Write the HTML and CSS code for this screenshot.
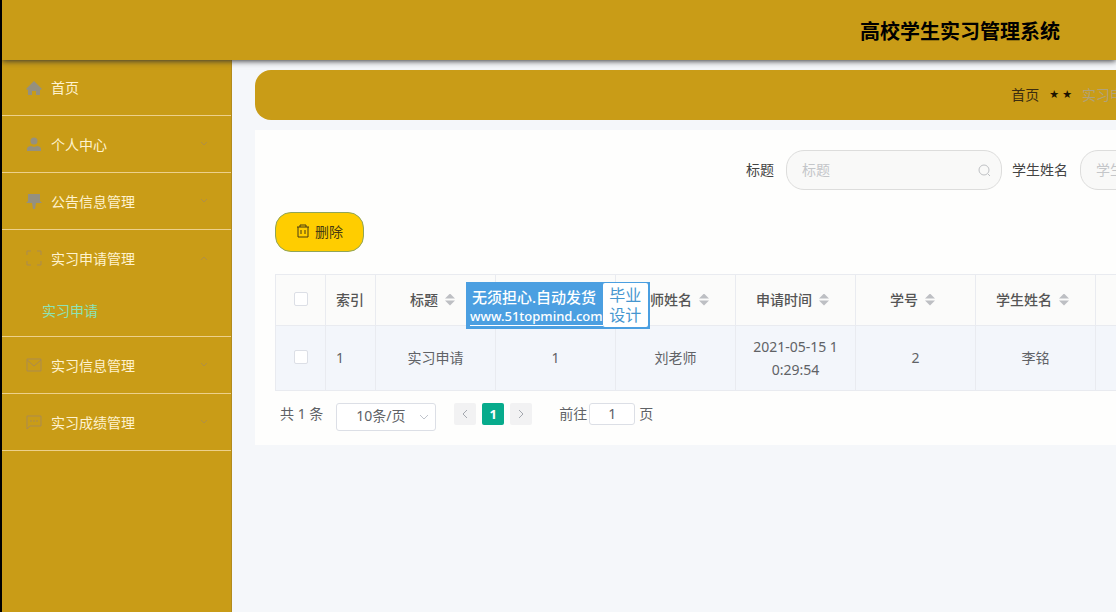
FILE: index.html
```html
<!doctype html>
<html lang="zh-CN">

<head>
    <meta charset="utf-8">
    <title>高校学生实习管理系统</title>
    <link rel="stylesheet" href="styles.css">
</head>

<body>
    <header class="header">
        <h1>高校学生实习管理系统</h1>
    </header>
    <div class="layout">
        <nav class="sidebar">
            <ul class="menu">
                <li>
                    <a href="#">
                        <svg class="menu-icon" viewBox="0 0 16 16"><path fill="currentColor" d="M8 1L0 9l2 1v5h4v-4h4v4h4v-5l2-1z"/></svg>
                        <span>首页</span>
                    </a>
                </li>
                <li>
                    <a href="#">
                        <svg class="menu-icon" viewBox="0 0 16 16"><circle cx="8" cy="5" r="3.5" fill="currentColor"/><path fill="currentColor" d="M1 15v-2c0-2 2-3 4-3l3 1 3-1c2 0 4 1 4 3v2z"/></svg>
                        <span>个人中心</span>
                        <svg class="arrow" viewBox="0 0 10 10"><path d="M2 3l3 3 3-3"/></svg>
                    </a>
                </li>
                <li>
                    <a href="#">
                        <svg class="menu-icon" viewBox="0 0 16 16"><path fill="currentColor" d="M2 1h12v7l2 2h-6l-1 6H7l-1-6H0l2-2z"/></svg>
                        <span>公告信息管理</span>
                        <svg class="arrow" viewBox="0 0 10 10"><path d="M2 3l3 3 3-3"/></svg>
                    </a>
                </li>
                <li>
                    <a href="#">
                        <svg class="menu-icon line" viewBox="0 0 16 16"><path d="M1 5V1h4M11 1h4v4M15 11v4h-4M5 15H1v-4"/></svg>
                        <span>实习申请管理</span>
                        <svg class="arrow" viewBox="0 0 10 10"><path d="M2 7l3-3 3 3"/></svg>
                    </a>
                    <a class="sub active" href="#">实习申请</a>
                </li>
                <li>
                    <a href="#">
                        <svg class="menu-icon line" viewBox="0 0 16 16"><path d="M1 2h14v12H1zM1 3l7 6 7-6"/></svg>
                        <span>实习信息管理</span>
                        <svg class="arrow" viewBox="0 0 10 10"><path d="M2 3l3 3 3-3"/></svg>
                    </a>
                </li>
                <li>
                    <a href="#">
                        <svg class="menu-icon line" viewBox="0 0 16 16"><path d="M1 15V2h14v10H4l-3 3M4 7h2M7 7h2M10 7h2"/></svg>
                        <span>实习成绩管理</span>
                        <svg class="arrow" viewBox="0 0 10 10"><path d="M2 3l3 3 3-3"/></svg>
                    </a>
                </li>
            </ul>
        </nav>
        <main class="main">
            <div class="breadcrumb">
                <a href="#">首页</a>
                <span class="stars"><span>★</span><span>★</span></span>
                <span class="current">实习申请</span>
            </div>
            <div class="panel">
                <form class="search">
                    <label for="title">标题</label>
                    <div class="search-box">
                        <input type="text" id="title" placeholder="标题">
                        <svg viewBox="0 0 14 14"><circle cx="7" cy="7" r="5"/><path d="M11 11l2 2"/></svg>
                    </div>
                    <label for="student">学生姓名</label>
                    <div class="search-box">
                        <input type="text" id="student" placeholder="学生姓名">
                    </div>
                </form>
                <button class="delete-btn" type="button">
                    <svg viewBox="0 0 14 14"><path d="M1 3h12M4 3V1h6v2M2 3v10h10V3M5 6v4M9 6v4"/></svg>
                    删除
                </button>
                <table class="list">
                    <colgroup>
                        <col class="col-small"><col class="col-small">
                        <col class="col"><col class="col"><col class="col">
                        <col class="col"><col class="col"><col class="col">
                        <col>
                    </colgroup>
                    <thead>
                        <tr>
                            <th><input type="checkbox" aria-label="全选"></th>
                            <th class="left">索引</th>
                            <th>标题<i class="sort"></i></th>
                            <th></th>
                            <th>老师姓名<i class="sort"></i></th>
                            <th>申请时间<i class="sort"></i></th>
                            <th>学号<i class="sort"></i></th>
                            <th>学生姓名<i class="sort"></i></th>
                            <th></th>
                        </tr>
                    </thead>
                    <tbody>
                        <tr>
                            <td><input type="checkbox" aria-label="选择"></td>
                            <td class="left">1</td>
                            <td>实习申请</td>
                            <td>1</td>
                            <td>刘老师</td>
                            <td class="time">2021-05-15 10:29:54</td>
                            <td>2</td>
                            <td>李铭</td>
                            <td></td>
                        </tr>
                    </tbody>
                </table>
                <div class="pagination">
                    <span class="total">共 1 条</span>
                    <div class="size">
                        <select aria-label="每页条数">
                            <option>10条/页</option>
                        </select>
                        <svg viewBox="0 0 10 10"><path d="M1 3l4 4 4-4"/></svg>
                    </div>
                    <div class="pager">
                        <button type="button" aria-label="上一页"><svg viewBox="0 0 10 10"><path d="M7 1L3 5l4 4"/></svg></button>
                        <button class="on" type="button">1</button>
                        <button type="button" aria-label="下一页"><svg viewBox="0 0 10 10"><path d="M3 1l4 4-4 4"/></svg></button>
                    </div>
                    <label for="page">前往</label>
                    <input type="text" id="page" value="1">
                    <span>页</span>
                </div>
            </div>
        </main>
    </div>
    <div class="ad">
        <div class="ad-text">
            <span>无须担心.自动发货</span>
            <a href="#">www.51topmind.com</a>
        </div>
        <div class="ad-box">毕业<br>设计</div>
    </div>
</body>

</html>
```
FILE: styles.css
```css
* {
    box-sizing: border-box;
}

body {
    display: flex;
    flex-direction: column;
    min-height: 100vh;
    margin: 0;
    border-left: 2px solid #000;
    background-color: #f5f7fa;
    color: #606266;
    font-family: "Noto Sans", "Noto Sans CJK SC", sans-serif;
    font-size: 14px;
    line-height: 23px;
    overflow: hidden;
}

a {
    text-decoration: none;
}

svg {
    fill: none;
    stroke: currentColor;
}

input,
select,
button {
    font: inherit;
    color: inherit;
}

.header {
    display: flex;
    justify-content: flex-end;
    align-items: center;
    height: 60px;
    padding: 4px 56px 0 0;
    background-color: #c99c17;
    box-shadow: 0 1px 6px #333;
    position: relative;
}

.header h1 {
    margin: 0;
    color: #000;
    font-size: 20px;
    line-height: 30px;
}

.layout {
    display: flex;
    flex: 1;
}

.sidebar {
    flex: 0 0 230px;
    background-color: #c99c17;
    border-right: 1px solid #b38b1c;
}

.menu {
    margin: 0;
    padding: 0;
    list-style: none;
}

.menu li {
    border-bottom: 1px solid #edd08b;
}

.menu li a {
    display: flex;
    align-items: center;
    height: 56px;
    padding: 0 22px 0 24px;
    color: #fff3cf;
}

.menu li:first-child a {
    height: 55px;
}

.menu li a.sub {
    height: 50px;
    padding: 0 0 2px 40px;
    color: #8de3b5;
}

.menu-icon {
    width: 16px;
    height: 16px;
    margin-right: 9px;
    color: #95907f;
    stroke: none;
}

.menu-icon.line {
    color: #ab8b50;
    stroke: currentColor;
}

.arrow {
    width: 10px;
    height: 10px;
    margin-left: auto;
    color: #b08f45;
}

/* wider than the window, the right side is cut off */
.main {
    flex: 1;
    min-width: 0;
    margin-right: -200px;
    padding: 10px 0 0 23px;
}

.breadcrumb {
    display: flex;
    justify-content: flex-end;
    align-items: center;
    height: 50px;
    margin-bottom: 10px;
    padding: 0 178px 2px 0;
    border-radius: 16px;
    background-color: #c99c17;
}

.breadcrumb a {
    color: #3b2c10;
}

.breadcrumb .stars {
    display: flex;
    gap: 3px;
    margin: 0 10px;
    color: #1c1300;
    font-family: "DejaVu Sans", sans-serif;
    font-size: 11px;
}

.breadcrumb .current {
    color: #b0a27a;
}

.panel {
    padding: 20px 20px 14px;
    background-color: #fefefd;
}

.search {
    display: flex;
    justify-content: flex-end;
    align-items: center;
    margin-bottom: 22px;
}

.search label {
    margin: 0 12px 0 10px;
    padding-bottom: 2px;
    color: #444;
}

.search-box {
    position: relative;
}

.search-box input {
    display: block;
    width: 216px;
    height: 40px;
    padding: 0 30px 2px 15px;
    border: 1px solid #dddddc;
    border-radius: 18px;
    background-color: #f9f9f8;
}

.search-box input::placeholder {
    color: #c4c6c9;
}

.search-box svg {
    position: absolute;
    top: 13px;
    right: 11px;
    width: 14px;
    height: 14px;
    color: #bfc1c4;
}

.delete-btn {
    display: flex;
    align-items: center;
    gap: 5px;
    height: 40px;
    margin-bottom: 22px;
    padding: 0 20px 2px;
    border: 1px solid #90a558;
    border-radius: 16px;
    background-color: #ffcd00;
    color: #473a12;
}

.delete-btn svg {
    width: 14px;
    height: 14px;
}

.list {
    width: 100%;
    table-layout: fixed;
    border-collapse: collapse;
}

.col-small {
    width: 50px;
}

.col {
    width: 120px;
}

.list th,
.list td {
    padding: 8px 10px 10px;
    border: 1px solid #e9ebf0;
    text-align: center;
    word-break: break-all;
}

.list th {
    height: 51px;
    background-color: #fbfbfa;
    color: #555;
    font-weight: 500;
    white-space: nowrap;
}

.list td {
    height: 65px;
    background-color: #f3f6fb;
}

.list td.time {
    padding: 9px 13px;
}

.list .left {
    text-align: left;
}

.list input {
    display: block;
    appearance: none;
    width: 14px;
    height: 14px;
    margin: 0 auto;
    border: 1px solid #dcdfe6;
    border-radius: 2px;
    background-color: #fff;
}

.sort {
    display: inline-block;
    width: 10px;
    height: 12px;
    margin: 0 6px 0 7px;
    vertical-align: -1px;
    background-color: #bdbfc3;
    clip-path: polygon(50% 0, 100% 42%, 0 42%, 0 58%, 100% 58%, 50% 100%, 0 58%, 0 42%);
}

.pagination {
    display: flex;
    align-items: flex-start;
    margin-top: 12px;
    padding-left: 5px;
    line-height: 22px;
}

.size {
    position: relative;
    margin: 0 18px 0 13px;
}

.size select {
    display: block;
    appearance: none;
    width: 100px;
    height: 28px;
    padding: 0 19px 2px;
    border: 1px solid #dcdfe6;
    border-radius: 3px;
    background-color: #fff;
}

.size svg {
    position: absolute;
    top: 9px;
    right: 7px;
    width: 10px;
    height: 10px;
    color: #c0c4cc;
}

.pager {
    display: flex;
    gap: 6px;
    margin-right: 27px;
}

.pager button {
    display: flex;
    justify-content: center;
    align-items: center;
    width: 22px;
    height: 22px;
    padding: 0;
    border: none;
    border-radius: 2px;
    background-color: #f2f2f3;
    color: #a4a8af;
}

.pager button.on {
    background-color: #07ab8c;
    color: #fff;
    font-size: 13px;
    font-weight: bold;
}

.pager svg {
    width: 10px;
    height: 10px;
}

.pagination input {
    width: 46px;
    height: 22px;
    margin: 0 4px 0 2px;
    border: 1px solid #dcdfe6;
    border-radius: 3px;
    text-align: center;
}

.ad {
    display: flex;
    position: absolute;
    top: 282px;
    left: 466px;
    width: 184px;
    height: 47px;
    padding: 1px 2px 2px 4px;
    background-color: #4b9fe1;
    color: #fff;
}

.ad-text {
    flex: 1;
    line-height: 20px;
    white-space: nowrap;
}

.ad-text span {
    display: block;
    padding: 4px 0 0 2px;
    font-size: 15px;
    font-weight: 500;
}

.ad-text a {
    display: block;
    width: max-content;
    border-bottom: 1px solid #fff;
    color: #fff;
    font-size: 13px;
    font-weight: 500;
    line-height: 18px;
}

.ad-box {
    width: 46px;
    border-radius: 2px;
    background-color: #fff;
    color: #4596cf;
    font-size: 16px;
    line-height: 20px;
    padding-top: 2px;
    text-align: center;
}
```
